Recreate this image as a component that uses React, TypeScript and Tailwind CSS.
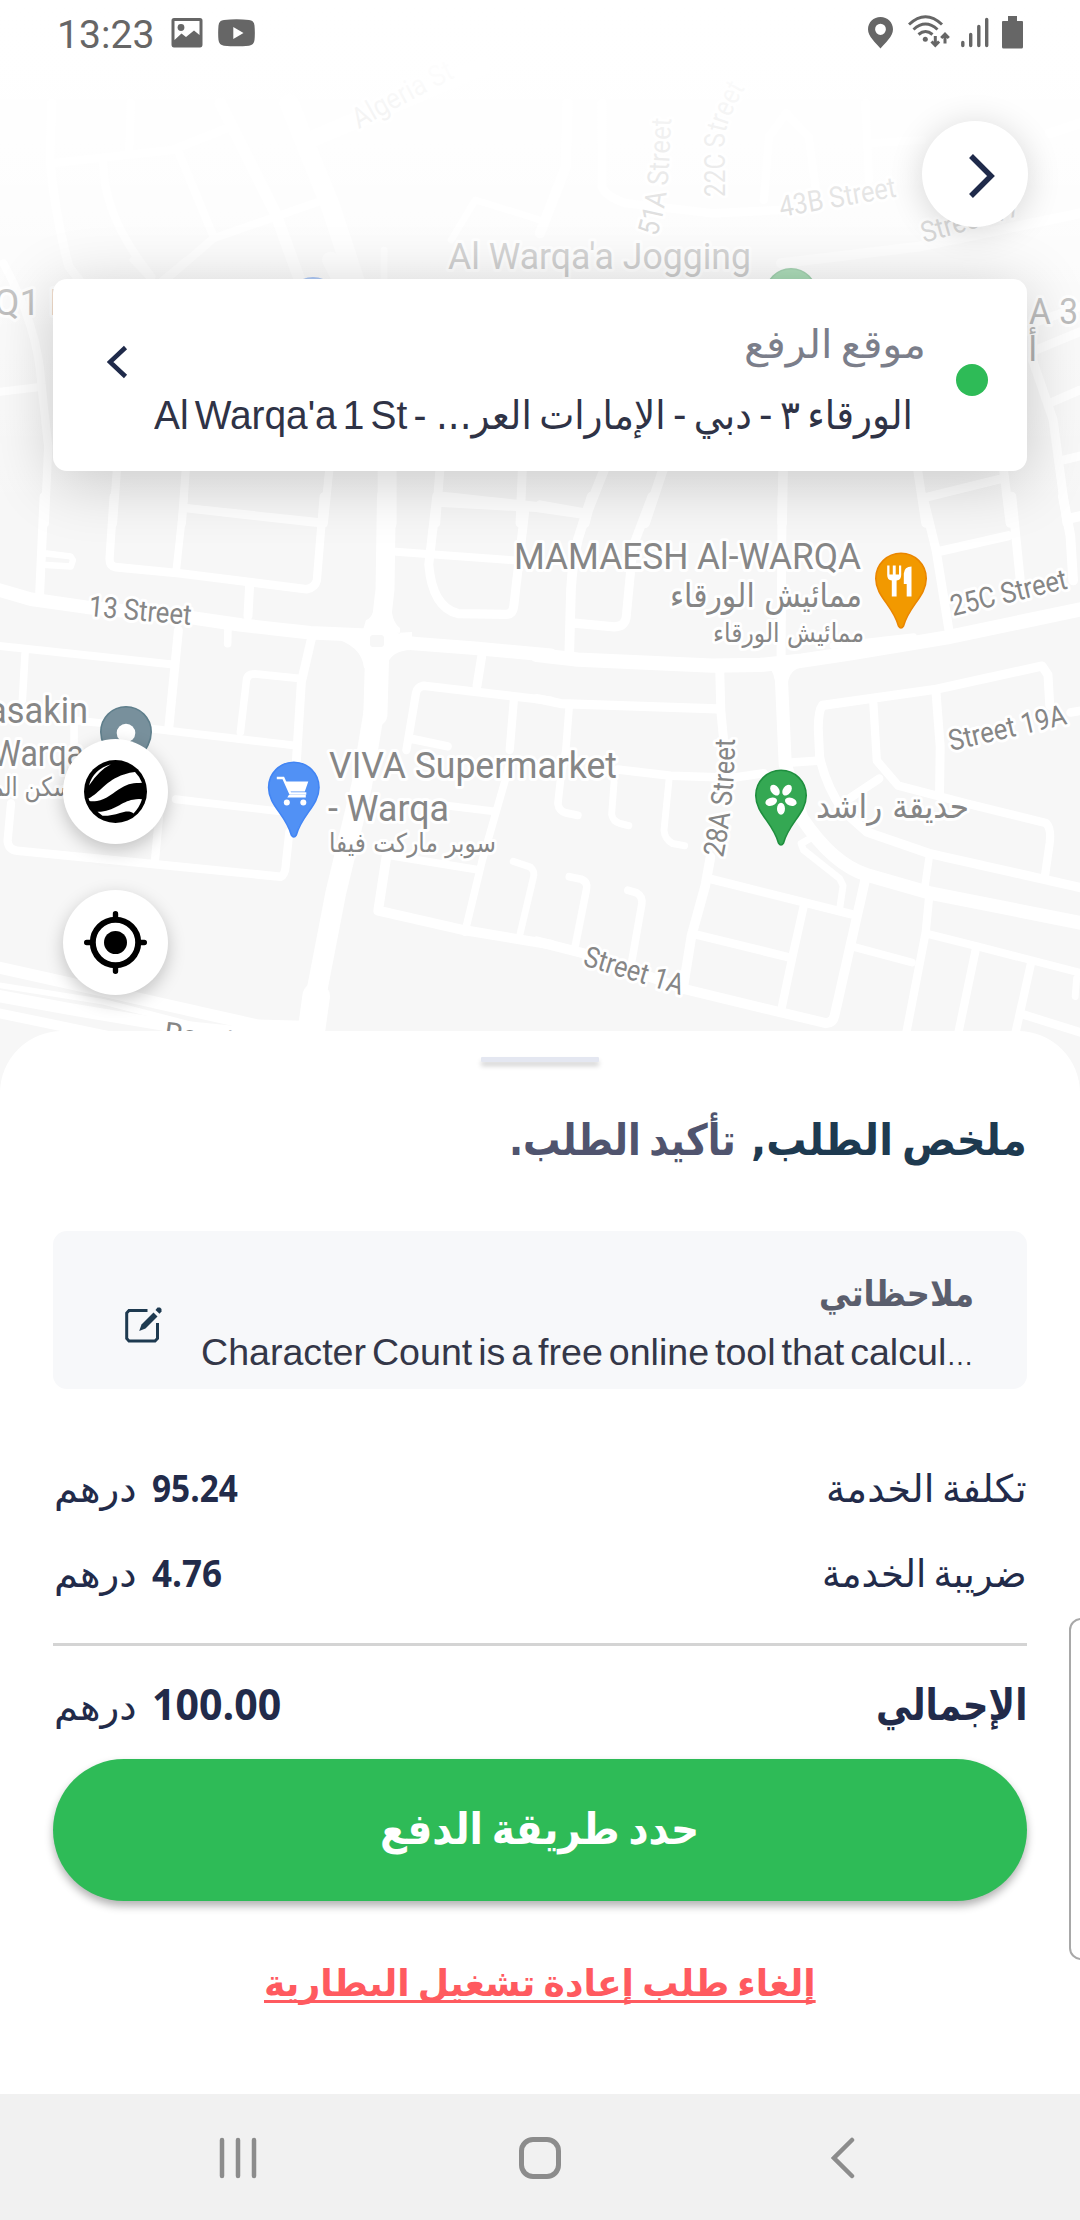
import { useLayoutEffect, useRef, useState, type ReactNode } from "react";

/** One line of text, condensed or widened so that it fills its box. */
function Fit({ className = "", children, ltr = false }: { className?: string; children: ReactNode; ltr?: boolean }) {
  const box = useRef<HTMLSpanElement>(null);
  const inner = useRef<HTMLSpanElement>(null);
  const [scale, setScale] = useState(1);
  useLayoutEffect(() => {
    if (box.current && inner.current && inner.current.offsetWidth > 0) {
      setScale(box.current.offsetWidth / inner.current.offsetWidth);
    }
  }, []);
  return (
    <span ref={box} dir={ltr ? "ltr" : "rtl"} className={"block shrink-0 whitespace-nowrap [word-spacing:-0.12em] " + className}>
      <span
        ref={inner}
        className={"inline-block " + (ltr ? "origin-left" : "origin-right")}
        style={{ transform: `scaleX(${scale})` }}
      >
        {children}
      </span>
    </span>
  );
}

type Road = [number, string];

const topLeft: Road[] = [
  [26, "M150 310L145 480Q160 650 200 800L230 840"],
  [24, "M380 310L375 460"],
  [26, "M150 490L500 450L670 380"],
  [24, "M300 490Q300 650 440 830"],
  [24, "M520 460L620 710M480 840L620 715L940 600"],
  [34, "M640 310L800 640L870 840"],
  [56, "M840 310L890 440L960 620L1030 840"],
  [50, "M900 420L1060 350L1400 200"],
  [20, "M1568 660L1380 600L1310 720M1115 750V840"],
];
const topRight: Road[] = [
  [30, "M80 310L75 500L0 700"],
  [26, "M180 310V560Q190 590 250 610L500 640L700 630"],
  [24, "M650 600L665 410L715 340L780 410L800 560"],
  [24, "M945 310L955 540M960 430L1110 420"],
  [30, "M700 790L1100 740L1568 640M1480 400L1568 370"],
];
const midLeft: Road[] = [
  [24, "M10 10Q110 200 120 370L140 560L130 790"],
  [24, "M0 395L110 382"],
  [24, "M340 620L328 790M540 620L528 790M957 620L940 790M540 745L930 790"],
  [55, "M1124 620V790"],
  [26, "M1278 620L1265 790M1285 708L1568 740M1517 620L1510 790"],
  [18, "M385 0L440 60M470 60L540 0"],
  [50, "M960 0L990 60"],
];
const midRight: Road[] = [
  [28, "M190 620L140 750L130 790M0 735L135 760M360 620L305 790M706 620L703 790"],
  [26, "M1095 620L1120 790M1110 715L1345 655M1345 620L1365 790"],
  [26, "M1430 300L1490 480L1530 790M1440 270L1568 215M1430 190L1568 140M1490 425L1568 390M1520 600L1568 588"],
];
const lowLeft: Road[] = [
  [38, "M-10 250L90 278L250 300L560 330L700 350L900 372L1000 376L1100 380L1200 402L1380 415L1600 435"],
  [55, "M1122 -10L1118 250L1100 400"],
  [70, "M1096 400L1090 600"],
  [60, "M1088 580L1050 800L975 1100L915 1400"],
  [80, "M918 1390L905 1480"],
  [26, "M128 -10L115 265"],
  [18, "M135 150L205 158L212 168L206 186L135 182"],
  [24, "M330 -10L318 165Q318 185 335 188L520 205L890 250Q915 245 920 225L940 -10"],
  [22, "M535 -10L512 195M540 22L930 62"],
  [26, "M725 235L720 325"],
  [22, "M662 355L661 402"],
  [26, "M518 365L490 640"],
  [22, "M-10 408L495 460M73 425L65 560"],
  [26, "M905 385L875 510L860 740"],
  [22, "M875 500L740 487Q715 487 715 510L698 650"],
  [22, "M200 615L440 640L860 688M215 620V740M510 838L840 875"],
  [24, "M465 850L450 1010"],
  [24, "M32 850L22 955Q25 980 50 982L450 1020L815 1055Q828 1050 830 1020L840 930"],
  [22, "M1150 145L1510 170M1268 8L1600 25"],
  [26, "M1268 -10L1245 180Q1255 300 1330 318L1470 320Q1490 320 1492 295L1525 20"],
  [26, "M1400 430L1385 520"],
  [24, "M1600 562L1230 520Q1210 525 1208 540L1180 700M1492 560L1480 700M1190 668L1300 690"],
  [22, "M1250 850L1435 872M1480 740L1400 1010L1350 1210M1130 995L1385 1035"],
  [28, "M1125 980L1098 1150L1350 1205L1600 1245"],
  [20, "M1490 1012L1540 1028Q1555 1040 1548 1060L1510 1215"],
  [34, "M-10 1308L350 1385L750 1472L880 1475"],
  [16, "M-10 1358L300 1405L560 1470"],
  [34, "M-10 1388L200 1425L480 1470L1000 1520"],
  [28, "M-10 1436L460 1530"],
];
const lowRight: Road[] = [
  [40, "M-10 434L110 447L500 464L640 462L760 450L900 430L1180 385L1600 300"],
  [28, "M150 -10L110 110Q95 170 90 250L85 430M-10 20L135 40"],
  [26, "M325 -10L270 130L250 330Q245 355 215 355L100 345"],
  [26, "M703 -10L700 440M1112 -10L1150 140L1190 380M1155 145L1360 100M1370 -10L1395 230"],
  [28, "M1518 -10L1540 100L1548 225M1545 50L1600 38"],
  [18, "M850 408L1085 382"],
  [26, "M522 480L525 590L535 690M-10 556L60 570L515 585"],
  [22, "M85 575L75 700L60 780L52 850Q55 872 75 876L110 883"],
  [24, "M225 755L380 772L560 778L650 765"],
  [20, "M215 790L208 880Q212 900 230 905L258 912M375 780L360 925Q362 950 385 962L420 968"],
  [22, "M85 1055L120 1062Q140 1070 135 1090L100 1260M255 1093L280 1100Q300 1110 295 1135L265 1300"],
  [28, "M-10 1236L130 1270L420 1370L830 1465Q850 1465 855 1445L945 1060"],
  [28, "M495 1000L480 1080L440 1220L415 1370"],
  [24, "M490 1060L905 1160M445 1215L720 1280M765 1140L735 1270L700 1430"],
  [38, "M700 480L712 740L760 890Q850 1020 950 1050L1130 1100L1600 1190"],
  [24, "M730 735L805 730"],
  [26, "M1480 575L1475 490L1458 465L1150 530L820 575Q808 590 808 640L812 720Q830 800 880 870L950 930L1130 990L1600 1092"],
  [24, "M968 570L978 730L1040 800L1240 850L1470 905Q1485 920 1480 960L1465 1060"],
  [24, "M985 780L900 835M1540 595L1600 585"],
  [26, "M1150 540L1162 690L1160 830"],
  [20, "M790 945L758 962L765 980L870 1060L880 1080L870 1145"],
  [22, "M1130 1000L1118 1080M1125 1215L1270 1250L1600 1332M905 1250L1080 1295"],
  [24, "M1130 1110L1120 1210L1050 1560M1265 1260L1200 1560M1425 1300L1365 1560M1400 1440L1600 1500"],
  [20, "M1558 1340L1554 1390"],
];

function Roads({ list, transform }: { list: Road[]; transform: string }) {
  return (
    <g transform={transform} fill="none" stroke="#fff" strokeLinecap="round" strokeLinejoin="round">
      {list.map(([w, d]) => (
        <path key={d} d={d} strokeWidth={w} />
      ))}
    </g>
  );
}

function Pin({ x, y, fill, edge, children }: { x: number; y: number; fill: string; edge: string; children?: ReactNode }) {
  return (
    <g transform={`translate(${x} ${y})`}>
      <path
        d="M0 .8C14 .8 25.2 12 25.2 26C25.2 44 8 53 2.5 73.5Q0 77.5 -2.5 73.5C-8 53 -25.2 44 -25.2 26C-25.2 12 -14 .8 0 .8Z"
        fill={fill}
        stroke={edge}
        strokeWidth="1.6"
      />
      {children}
    </g>
  );
}

function Label({ x, y, w, size = 37, angle = 0, ar = false, end = false, children }: {
  x: number; y: number; w?: number; size?: number; angle?: number; ar?: boolean; end?: boolean; children: string;
}) {
  return (
    <text
      transform={`translate(${x} ${y}) rotate(${angle})`}
      fontSize={size}
      textLength={w}
      lengthAdjust="spacingAndGlyphs"
      textAnchor={end ? "end" : "start"}
      className={ar ? "font-['DejaVu_Sans',sans-serif]" : "font-['Roboto',sans-serif]"}
    >
      {children}
    </text>
  );
}

function MapCanvas() {
  return (
    <svg className="absolute left-0 top-0" width="1080" height="1110" viewBox="0 0 1080 1110">
      <defs>
        <linearGradient id="fade" x1="0" y1="0" x2="0" y2="1">
          <stop offset="0" stopColor="#fff" stopOpacity="1" />
          <stop offset="0.14" stopColor="#fff" stopOpacity="0.98" />
          <stop offset="0.2" stopColor="#fff" stopOpacity="0.93" />
          <stop offset="0.35" stopColor="#fff" stopOpacity="0.82" />
          <stop offset="0.5" stopColor="#fff" stopOpacity="0.63" />
          <stop offset="0.62" stopColor="#fff" stopOpacity="0.44" />
          <stop offset="1" stopColor="#fff" stopOpacity="0" />
        </linearGradient>
        <path id="s51" d="M657 237Q668 200 669 165L672 110" />
        <path id="s22" d="M725 197L725 140Q725 120 750 80" />
        <path id="s28" d="M723 858Q735 800 735 730" />
        <path id="sAlg" d="M359 129Q400 105 466 72" />
      </defs>
      <rect width="1080" height="1110" fill="#f7f7f7" />
      <Roads list={topLeft} transform="scale(.3444 .3333)" />
      <Roads list={topRight} transform="translate(540 0) scale(.3444 .3333)" />
      <Roads list={midLeft} transform="translate(0 260) scale(.3444 .3333)" />
      <Roads list={midRight} transform="translate(540 260) scale(.3444 .3333)" />
      <Roads list={lowLeft} transform="translate(0 500) scale(.3444 .3571)" />
      <Roads list={lowRight} transform="translate(540 500) scale(.3444 .3571)" />
      <path d="M330 637Q362 645 364 668H386Q390 650 412 650V632Z M366 620Q374 618 375 600H391Q391 622 400 628V640H360Z M768 666Q775 672 776 690H787Q788 670 800 668L830 660H765Z" fill="#fff" />
      <rect x="370" y="635" width="14" height="12" rx="3" fill="#f7f7f7" />

      <g fill="#868686" stroke="#fff" strokeWidth="6" strokeLinejoin="round" style={{ paintOrder: "stroke" }}>
        <Label x={448} y={268.7} w={303}>Al Warqa'a Jogging</Label>
        <Label x={-6} y={315}>Q1 M</Label>
        <Label x={1029} y={324} w={49}>A 3</Label>
        <Label x={1028} y={361} size={34} ar>أ</Label>
        <Label x={514} y={569} w={347}>MAMAESH Al-WARQA</Label>
        <Label x={670} y={607} w={192} size={33} ar>ممائيش الورقاء</Label>
        <Label x={713} y={642} w={151} size={26} ar>ممائيش الورقاء</Label>
        <Label x={329} y={777.5} w={288}>VIVA Supermarket</Label>
        <Label x={328} y={820.5} w={121}>- Warqa</Label>
        <Label x={329} y={852} w={167} size={26} ar>سوبر ماركت فيفا</Label>
        <Label x={816} y={818} w={153} size={33} ar>حديقة راشد</Label>
        <Label x={88} y={723} w={130} end>Masakin</Label>
        <Label x={84} y={766} w={128} end>Al Warqa</Label>
        <Label x={-10} y={796} w={95} size={26} ar>مسكن الم</Label>
        <Label x={953} y={616} w={119} size={29} angle={-13.5}>25C Street</Label>
        <Label x={88} y={616} w={103} size={29} angle={5}>13 Street</Label>
        <Label x={951} y={751} w={120} size={29} angle={-13}>Street 19A</Label>
        <Label x={582} y={965} w={103} size={29} angle={17}>Street 1A</Label>
        <Label x={781} y={217} w={118} size={29} angle={-10}>43B Street</Label>
        <Label x={924} y={243} w={102} size={29} angle={-16}>Street 17</Label>
        <Label x={163} y={1042} size={29} angle={8}>Ras Al Khor</Label>
        <text fontSize="29" className="font-['Roboto',sans-serif]"><textPath href="#s51" textLength="120" lengthAdjust="spacingAndGlyphs">51A Street</textPath></text>
        <text fontSize="29" className="font-['Roboto',sans-serif]"><textPath href="#s22" textLength="114" lengthAdjust="spacingAndGlyphs">22C Street</textPath></text>
        <text fontSize="29" className="font-['Roboto',sans-serif]"><textPath href="#s28" textLength="120" lengthAdjust="spacingAndGlyphs">28A Street</textPath></text>
        <text fontSize="29" className="font-['Roboto',sans-serif]"><textPath href="#sAlg" textLength="110" lengthAdjust="spacingAndGlyphs">Algeria St</textPath></text>
      </g>

      <Pin x={313} y={277} fill="#4285f4" edge="#3f7ee8" />
      <Pin x={791} y={268} fill="#34a853" edge="#1e8e3e" />
      <Pin x={126} y={706} fill="#78909c" edge="#5f7f8c">
        <circle cy="27" r="9.3" fill="#fff" />
      </Pin>
      <Pin x={293.8} y={761.5} fill="#5191f5" edge="#4285f4">
        <path d="M-17 16.5H-10.5L-3.5 32H12.5" fill="none" stroke="#fff" strokeWidth="2.4" />
        <path d="M-9.5 20H14.5L11 30H-4.5ZM-5 33.5H12V36H-6.5Z" fill="#fff" />
        <circle cx="-7" cy="41" r="3" fill="#fff" />
        <circle cx="9.5" cy="41" r="3" fill="#fff" />
      </Pin>
      <Pin x={781} y={769.5} fill="#34a853" edge="#1e8e3e">
        {[36, 108, 180, 252, 324].map((a) => (
          <ellipse key={a} cx="0" cy="-10.3" rx="4" ry="6" fill="#fff" transform={`translate(0 29) rotate(${a})`} />
        ))}
      </Pin>
      <Pin x={901} y={552.5} fill="#f29900" edge="#ea8600">
        <path d="M-13.8 13V22.5Q-13.8 27.5 -9.2 28V44H-4.4V28Q.2 27.5 .2 22.5V13H-2V22H-5.3V13H-8.2V22H-11.5V13Z" fill="#fff" />
        <path d="M10.5 14V44H5.7V31.5H2.8V21Q3.4 14 10.5 14Z" fill="#fff" />
      </Pin>
      <rect width="1080" height="520" fill="url(#fade)" />
    </svg>
  );
}

function StatusBar() {
  return (
    <header className="flex h-[66px] items-start pl-[57px] text-[#666]">
      <span className="pt-[10px] font-['Roboto',sans-serif] text-[39.5px] leading-[49px]">
        <Fit ltr className="w-[97px]">13:23</Fit>
      </span>
      <svg className="ml-[17px] mt-[18px]" width="32" height="30" viewBox="0 0 32 30" fill="currentColor">
        <path fillRule="evenodd" d="M3 0H29Q31.5 0 31.5 2.5V26.500Q31.500 29.500 29 29.500H3Q.5 29.500 .5 26.500V2.500Q.5 0 3 0ZM3.500 3V22L10.500 15.500L15 19L23 12.500L28.500 17V3Z" />
        <circle cx="10" cy="9.500" r="3.400" />
      </svg>
      <svg className="ml-[15px] mt-[19px]" width="37" height="28" viewBox="0 0 37 28" fill="currentColor">
        <path fillRule="evenodd" d="M6 1Q18.500 -.3 31 1Q36 1.400 36.500 6.500Q37.200 14 36.500 21Q36 26 31 26.700Q18.500 28 6 26.700Q1 26 .5 21Q-.2 14 .5 6.500Q1 1.400 6 1ZM15.300 8V20L25.500 14Z" />
      </svg>
      <svg className="ml-[613px] mt-[17px]" width="25" height="32" viewBox="0 0 25 32" fill="currentColor">
        <path fillRule="evenodd" d="M12.500 0C19.400 0 25 5.400 25 12.300C25 19.500 17.500 25.500 12.500 31.500C7.500 25.500 0 19.500 0 12.300C0 5.400 5.600 0 12.500 0ZM12.500 6.700A5.400 5.600 0 1 0 12.500 17.900A5.400 5.600 0 1 0 12.500 6.700Z" />
      </svg>
      <svg className="ml-[15px] mt-[15px]" width="42" height="33" viewBox="0 0 42 33" fill="none" stroke="currentColor" strokeWidth="3">
        <path d="M1 9.500Q17.500 -6 34 9.500M5.500 14.500Q17.500 3.500 29.500 14.500M10.500 19.500Q17.500 13.500 24.500 19.500" />
        <circle cx="17.300" cy="24.200" r="2.500" fill="currentColor" stroke="none" />
        <path d="M27.300 21V30M23.500 26.500L27.300 30.300L31.100 26.500M37 28.500V19M33.200 23L37 19.200L40.800 23" />
      </svg>
      <svg className="ml-[11px] mt-[17px]" width="28" height="31" viewBox="0 0 28 31" stroke="currentColor" strokeWidth="3.400" strokeLinecap="round">
        <path d="M1.800 25.500V28.500M9.700 17.500V28.500M17.800 9.500V28.500M25.700 2.500V28.500" />
      </svg>
      <svg className="ml-[13px] mt-[16px]" width="21" height="33" viewBox="0 0 21 33" fill="currentColor">
        <path d="M6 0H15V5H20Q21 5 21 6V31Q21 32.500 19.500 32.500H1.500Q0 32.500 0 31V6Q0 5 1 5H6Z" />
      </svg>
    </header>
  );
}

const round = "grid place-items-center rounded-full bg-white";

function AddressCard() {
  return (
    <section className="ml-[53px] mt-[52px] flex h-[192px] w-[974px] rounded-[14px] bg-white shadow-[0_10px_64px_rgba(0,0,0,0.2)]">
      <svg className="ml-[54px] mt-[66px]" width="22" height="34" viewBox="0 0 22 34" fill="none" stroke="#1f2a4a" strokeWidth="4.600">
        <path d="M18.500 2.500L3 17L18.500 31.500" />
      </svg>
      <div className="ml-[25px] flex flex-col items-end pt-[38px]">
        <Fit className="mr-[-13px] w-[182px] font-['DejaVu_Sans',sans-serif] text-[39px] leading-[56px] text-[#7b7e8a]">موقع الرفع</Fit>
        <div className="mt-[14px] flex text-[#2f3346]">
          <Fit ltr className="mr-[10px] w-[272px] font-['Liberation_Sans',sans-serif] text-[40px] leading-[56px]">Al Warqa'a 1 St -</Fit>
          <Fit className="w-[477px] font-['DejaVu_Sans',sans-serif] text-[40px] leading-[56px]">الورقاء ٣ - دبي - الإمارات العر...</Fit>
        </div>
      </div>
      <span className="ml-[43px] mt-[85px] size-8 rounded-full bg-[#2ebb57]" />
    </section>
  );
}

function PriceRow({ label, labelClass, amount, amountClass, rowClass }: {
  label: string; labelClass: string; amount: string; amountClass: string; rowClass: string;
}) {
  return (
    <div className={"flex items-baseline justify-between " + rowClass}>
      <div className="flex items-baseline">
        <Fit className="ml-[1px] mr-[15px] w-[83px] font-['DejaVu_Sans',sans-serif] text-[38px] leading-[56px]">درهم</Fit>
        <Fit ltr className={amountClass}>{amount}</Fit>
      </div>
      <Fit className={labelClass}>{label}</Fit>
    </div>
  );
}

function SummarySheet() {
  return (
    <main className="relative flex h-[1063px] flex-col rounded-t-[62px] bg-white px-[53px] pt-[26px] text-[#222b4a]">
      <div className="h-[5px] w-[118px] self-center rounded-[1px] bg-[#e4e7f1] shadow-[0_4px_5px_rgba(0,0,0,0.18)]" />
      <h1 dir="rtl" className="mt-[48px] flex gap-[15px] font-['DejaVu_Sans',sans-serif] text-[43px] leading-[60px]">
        <Fit className="w-[276px] font-bold text-[#1e3a50]">ملخص الطلب,</Fit>
        <Fit className="w-[227px] font-bold text-[#50546e]">تأكيد الطلب.</Fit>
      </h1>
      <section className="mt-[61px] flex h-[158px] rounded-[14px] bg-[#f7f8fa]">
        <svg className="ml-[71px] mt-[75px]" width="39" height="38" viewBox="0 0 39 38" fill="none" stroke="#1e3a50" strokeWidth="3">
          <path d="M23.500 4.500H5L2.700 7V32.500L5 35H31L33.500 32.500V17" />
          <path d="M29.500 6.500L33.500 10.500L21.500 22.500L15.200 25L17.500 18.500Z" fill="#1e3a50" stroke="none" />
          <path d="M31.500 4L33.500 1.500H36L37.500 3V5.500L35.500 7.800Z" fill="#1e3a50" stroke="none" />
        </svg>
        <div className="ml-[38px] flex flex-col items-end pt-[37px]">
          <Fit className="w-[155px] font-['DejaVu_Sans',sans-serif] text-[36px] font-bold leading-[52px] text-[#5a5e6d]">ملاحظاتي</Fit>
          <Fit ltr className="mt-[7px] w-[773px] font-['Liberation_Sans',sans-serif] text-[37px] leading-[52px] text-[#343748]">Character Count is a free online tool that calcul<span className="text-[27px]">…</span></Fit>
        </div>
      </section>
      <PriceRow
        rowClass="mt-[70px] h-[56px]"
        label="تكلفة الخدمة"
        labelClass="w-[201px] font-['DejaVu_Sans',sans-serif] text-[38px] leading-[56px]"
        amount="95.24"
        amountClass="w-[86px] font-['Open_Sans',sans-serif] text-[38px] font-bold leading-[56px]"
      />
      <PriceRow
        rowClass="mt-[29px] h-[56px]"
        label="ضريبة الخدمة"
        labelClass="w-[205px] font-['DejaVu_Sans',sans-serif] text-[38px] leading-[56px]"
        amount="4.76"
        amountClass="w-[70px] font-['Open_Sans',sans-serif] text-[38px] font-bold leading-[56px]"
      />
      <hr className="mt-[43px] h-[3px] border-0 bg-[#d4d4d4]" />
      <PriceRow
        rowClass="mt-[28px] h-[60px]"
        label="الإجمالي"
        labelClass="w-[151px] font-['DejaVu_Sans',sans-serif] text-[43px] font-bold leading-[60px]"
        amount="100.00"
        amountClass="w-[129px] font-['Open_Sans',sans-serif] text-[43px] font-bold leading-[60px]"
      />
      <button className="mt-[25px] flex h-[142px] justify-center rounded-full bg-[#2ebb57] pt-[40px] text-white shadow-[0_5px_9px_rgba(0,0,0,0.3)]">
        <Fit className="w-[319px] font-['DejaVu_Sans',sans-serif] text-[43px] font-bold leading-[60px]">حدد طريقة الدفع</Fit>
      </button>
      <button className="mt-[56px] self-center border-0 text-[#ff5a5f]">
        <Fit className="w-[552px] font-['DejaVu_Sans',sans-serif] text-[37px] font-bold leading-[54px]">
          <span className="underline decoration-[3px] underline-offset-[4px] [text-decoration-skip-ink:none]">إلغاء طلب إعادة تشغيل البطارية</span>
        </Fit>
      </button>
      <div className="absolute right-[-4px] top-[587px] h-[342px] w-[15px] rounded-l-[12px] border-2 border-[#a8a8a8] bg-white" />
    </main>
  );
}

export default function App() {
  return (
    <div className="relative flex h-[2220px] w-[1080px] flex-col overflow-hidden bg-white">
      <MapCanvas />
      <div className="relative flex flex-col">
        <StatusBar />
        <button className={round + " ml-[922px] mt-[55px] size-[106px] shadow-[0_4px_34px_rgba(0,0,0,0.16)]"}>
          <svg className="ml-[11px] mt-[3px]" width="28" height="46" viewBox="0 0 28 46" fill="none" stroke="#1f2a4a" strokeWidth="5.500">
            <path d="M4 3L24 23L4 43" />
          </svg>
        </button>
        <AddressCard />
        <div className="ml-[63px] mt-[268px] flex w-[105px] flex-col gap-[46px] pb-[36px]">
          <button className={round + " size-[105px] shadow-[0_6px_18px_rgba(0,0,0,0.22)]"}>
            <svg width="63" height="63" viewBox="0 0 63 63">
              <circle cx="31.500" cy="31.500" r="31.500" fill="#000" />
              <path d="M4.500 38.500C16 33 22 20 40 14.500Q46 12 51 12Q56 17 58 22.700C50 23 44 23.500 38 27.500C30 32 22 40 13 41Q8 41.500 5.500 41Z" fill="#fff" />
              <path d="M13.500 51.700C30 52 38 41 49 39.700Q54 38.800 58 39.300Q55.500 47.500 49.500 53.500C46 50.500 41 51.500 36 53C30 55 24 56 18.500 55.800Z" fill="#fff" />
              <path d="M5 25.500Q9 9.500 27 4.200Q15 10 5 25.500Z" fill="#fff" />
            </svg>
          </button>
          <button className={round + " size-[105px] shadow-[0_6px_18px_rgba(0,0,0,0.22)]"}>
            <svg width="63" height="63" viewBox="0 0 63 63" fill="none" stroke="#000">
              <circle cx="31.500" cy="31.500" r="22.700" strokeWidth="6" />
              <circle cx="31.500" cy="31.500" r="11.500" fill="#000" stroke="none" />
              <path d="M31.500 2.700V8M31.500 55V60.300M2.700 31.500H8M55 31.500H60.300" strokeWidth="5.400" strokeLinecap="round" />
            </svg>
          </button>
        </div>
        <SummarySheet />
        <nav className="flex h-[126px] justify-between bg-[#f1f1f1] pl-[219px] pr-[225px] pt-[43px] text-[#8c8c8c]">
          <svg width="38" height="42" viewBox="0 0 38 42" stroke="currentColor" strokeWidth="4.500" strokeLinecap="round">
            <path d="M3 3V39M19 3V39M35 3V39" />
          </svg>
          <span className="ml-[-8px] size-[42px] rounded-[14px] border-5 border-current" />
          <svg width="24" height="42" viewBox="0 0 24 42" fill="none" stroke="currentColor" strokeWidth="4.500" strokeLinecap="round">
            <path d="M21 3L3 21L21 39" />
          </svg>
        </nav>
      </div>
    </div>
  );
}
